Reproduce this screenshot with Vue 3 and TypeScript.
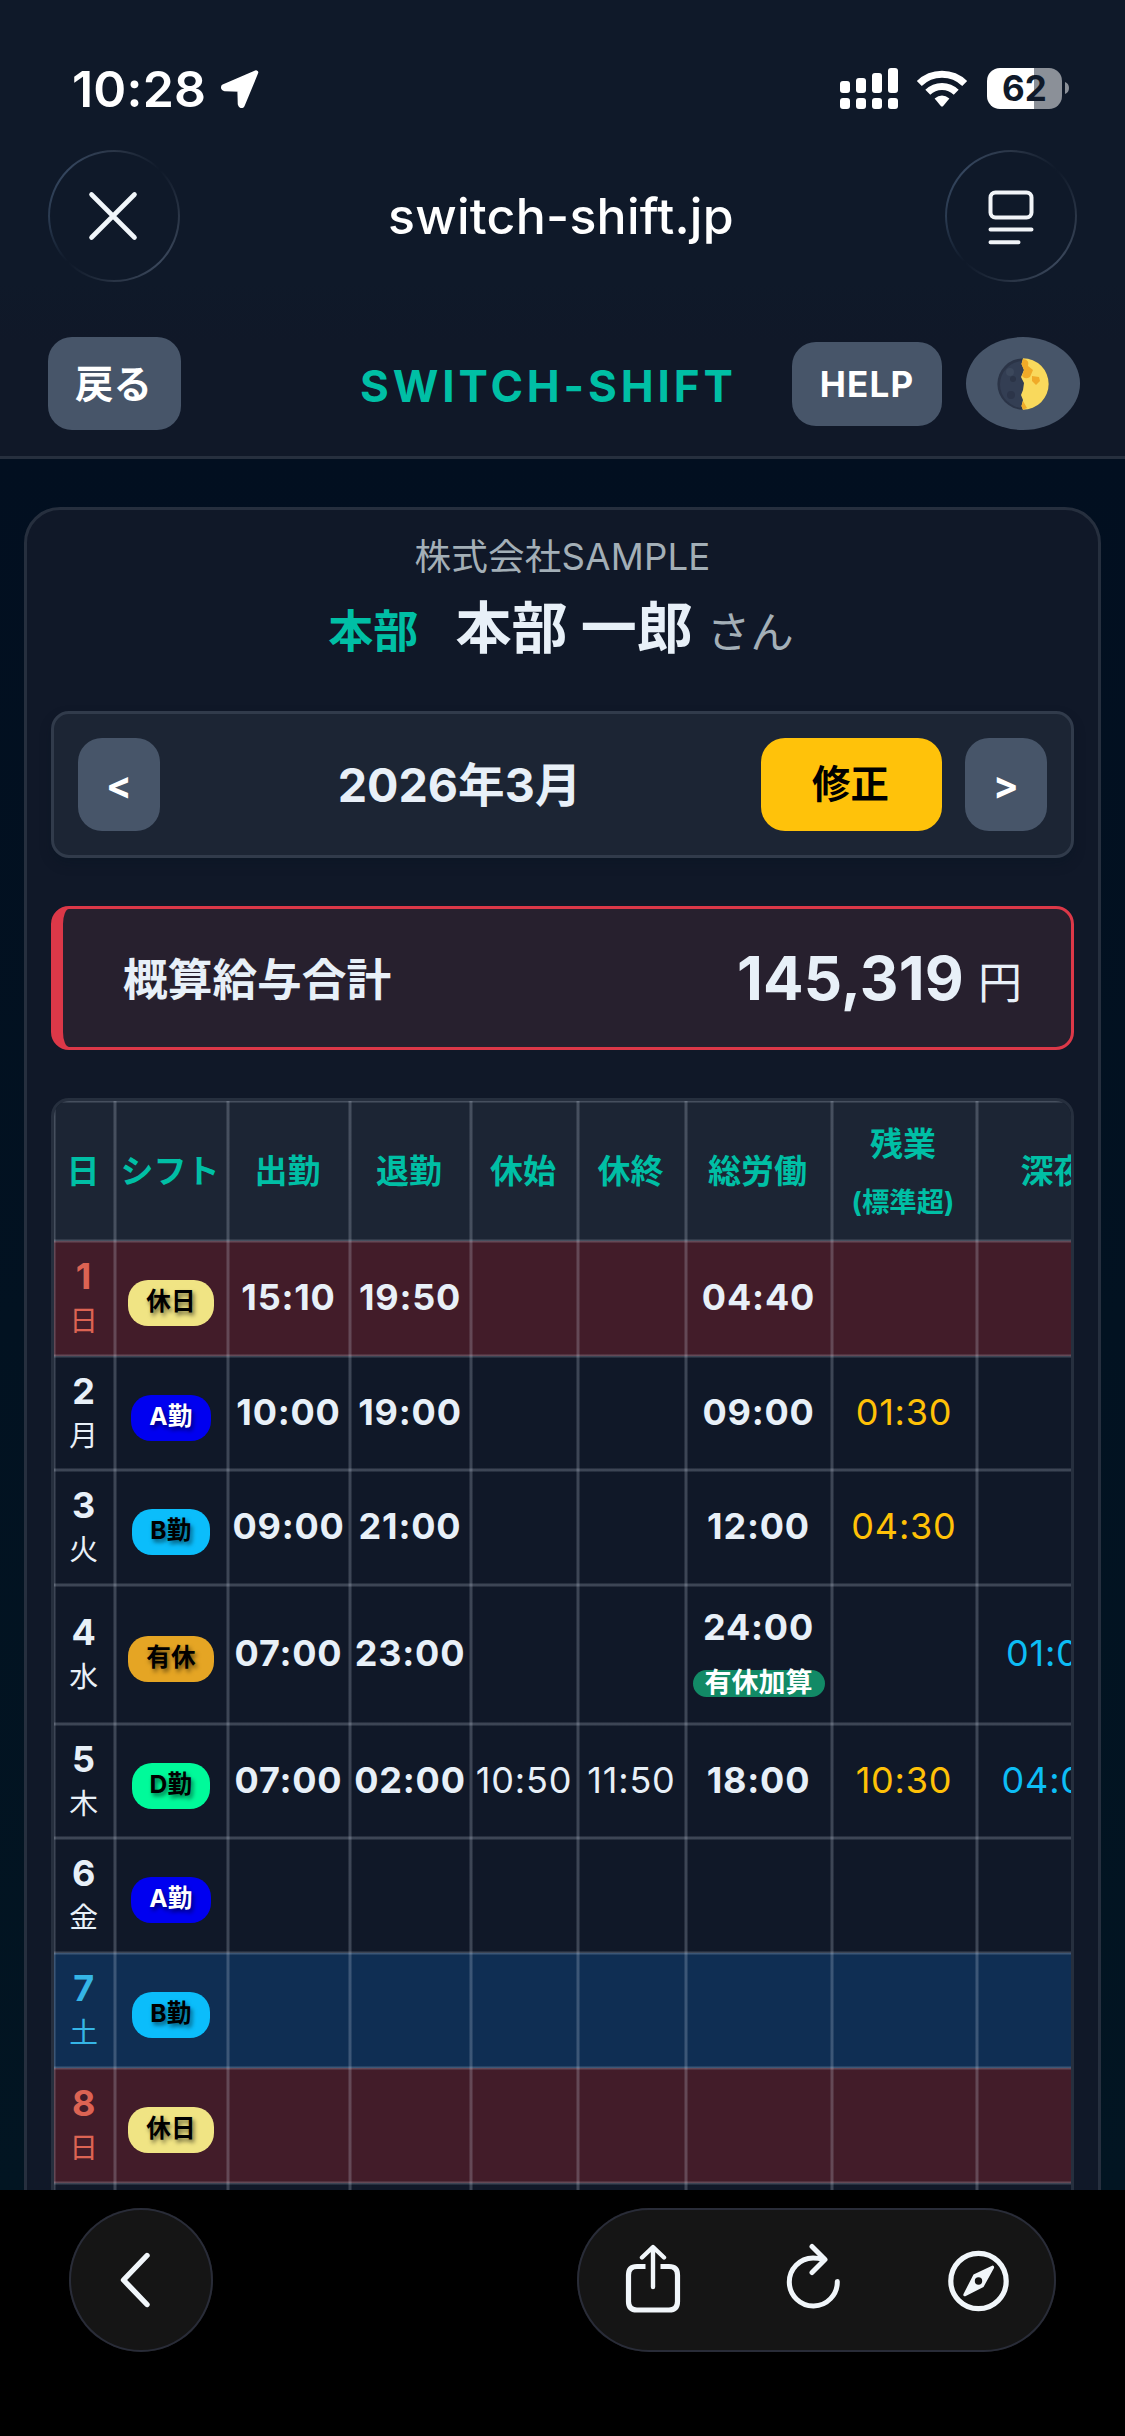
<script setup lang="ts">
interface Shift {
  label: string
  kind: string
}

interface DayRow {
  day: number
  weekday: string
  shift: Shift
  start?: string
  end?: string
  restStart?: string
  restEnd?: string
  total?: string
  paidLeave?: boolean
  overtime?: string
  night?: string
  tone?: 'sunday' | 'saturday'
  height: number
}

const off: Shift = { label: '休日', kind: 'off' }
const a: Shift = { label: 'A勤', kind: 'a' }
const b: Shift = { label: 'B勤', kind: 'b' }
const d: Shift = { label: 'D勤', kind: 'd' }
const paid: Shift = { label: '有休', kind: 'paid' }

const rows: DayRow[] = [
  { day: 1, weekday: '日', shift: off, start: '15:10', end: '19:50', total: '04:40', tone: 'sunday', height: 115 },
  { day: 2, weekday: '月', shift: a, start: '10:00', end: '19:00', total: '09:00', overtime: '01:30', height: 114 },
  { day: 3, weekday: '火', shift: b, start: '09:00', end: '21:00', total: '12:00', overtime: '04:30', height: 115 },
  { day: 4, weekday: '水', shift: paid, start: '07:00', end: '23:00', total: '24:00', paidLeave: true, night: '01:00', height: 139 },
  { day: 5, weekday: '木', shift: d, start: '07:00', end: '02:00', restStart: '10:50', restEnd: '11:50', total: '18:00', overtime: '10:30', night: '04:00', height: 114 },
  { day: 6, weekday: '金', shift: a, height: 115 },
  { day: 7, weekday: '土', shift: b, tone: 'saturday', height: 115 },
  { day: 8, weekday: '日', shift: off, tone: 'sunday', height: 115 },
]
</script>

<template>
  <div class="screen">
    <div class="status">
      <span class="clock">10:28</span>
      <svg class="loc" width="40" height="40" viewBox="0 0 40 40">
        <path d="M36 3.5 L3.5 17.5 Q2.6 19.6 5 20 L19.6 20.4 L20 35 Q20.6 37.6 22.4 36.5 Z" fill="#fff" stroke="#fff" stroke-width="4.5" stroke-linejoin="round" />
      </svg>
      <svg class="signal" width="58" height="41" viewBox="0 0 58 41" fill="#fff">
        <rect x="0" y="13" width="10" height="12" rx="3" />
        <rect x="16" y="10" width="10" height="15" rx="3" />
        <rect x="32" y="5" width="10" height="20" rx="3" />
        <rect x="48" y="0" width="10" height="25" rx="3" />
        <rect v-for="n in 4" :key="n" :x="(n - 1) * 16" y="30" width="10" height="11" rx="3" />
      </svg>
      <svg class="wifi" width="52" height="38" viewBox="0 0 52 38">
        <path d="M3.3 13.6 A32.5 32.5 0 0 1 48.7 13.6" fill="none" stroke="#fff" stroke-width="7" />
        <path d="M11.8 22.3 A20.2 20.2 0 0 1 40.2 22.3" fill="none" stroke="#fff" stroke-width="7" />
        <path d="M18.6 28.6 Q26 22.6 33.4 28.6 L27 36.2 Q26 37 25 36.2 Z" fill="#fff" />
      </svg>
      <div class="battery"><span>62</span></div>
      <svg class="nub" width="4" height="12" viewBox="0 0 4 12"><path d="M0 0 Q4 1.5 4 6 T0 12 Z" fill="#8b9098" /></svg>
    </div>

    <div class="browser-bar">
      <div class="round close">
        <svg width="52" height="52" viewBox="0 0 52 52">
          <path d="M4.5 4.5 L47.5 47.5 M47.5 4.5 L4.5 47.5" stroke="#f1f6fa" stroke-width="4.6" stroke-linecap="round" />
        </svg>
      </div>
      <span class="host">switch-shift.jp</span>
      <div class="round reader">
        <svg width="46" height="56" viewBox="0 0 46 56" fill="none" stroke="#f1f4f8" stroke-width="4" stroke-linecap="round">
          <rect x="2.5" y="2.5" width="41" height="25" rx="5" />
          <path d="M2.500 39.500 H43.500 M2.500 52.300 H30.500" />
        </svg>
      </div>
    </div>

    <header class="app-bar">
      <button class="btn back">戻る</button>
      <span class="brand">SWITCH-SHIFT</span>
      <button class="btn help">HELP</button>
      <button class="btn theme">
        <svg width="52" height="54" viewBox="0 0 52 54">
          <circle cx="26" cy="27" r="25.6" fill="#2b3447" />
          <circle cx="26.5" cy="27.5" r="23.5" fill="#333e53" />
          <path d="M26 1.3 A25.7 25.7 0 0 1 26 52.7 L24.5 49 L26 43 L24 38 L26 33 L27 26 L24 20 L27 13 L24.5 7 Z" fill="#f9d95c" />
          <path d="M26 2 Q33 3 31 9 L36 13 L33 20 Q28 23 25 19 L27 13 L24.5 7 Z M35 19 L42 20 L43 24 L39 28 L35 24 Z M26 44 L30 51 L26 52.7 L24.5 49 Z" fill="#f0aa28" />
          <circle cx="13" cy="15" r="4" fill="#3c485c" />
          <circle cx="16" cy="22" r="3" fill="#2b3447" />
          <circle cx="14" cy="38" r="4" fill="#2c3549" />
        </svg>
      </button>
    </header>

    <main class="page">
      <section class="card">
        <div class="company">株式会社SAMPLE</div>
        <div class="person">
          <span class="dept">本部</span>
          <span class="name">本部 一郎</span>
          <span class="san">さん</span>
        </div>

        <div class="month">
          <button class="btn step">&lt;</button>
          <span class="label">2026年3月</span>
          <button class="btn edit">修正</button>
          <button class="btn step">&gt;</button>
        </div>

        <div class="salary">
          <span class="caption">概算給与合計</span>
          <span class="amount">145,319</span>
          <span class="yen">円</span>
        </div>

        <div class="table">
          <div class="row head">
            <div class="cell">日</div>
            <div class="cell">シフト</div>
            <div class="cell">出勤</div>
            <div class="cell">退勤</div>
            <div class="cell">休始</div>
            <div class="cell">休終</div>
            <div class="cell">総労働</div>
            <div class="cell two-line"><span>残業</span><small>(標準超)</small></div>
            <div class="cell">深夜</div>
          </div>
          <div v-for="r in rows" :key="r.day" class="row" :class="r.tone" :style="{ height: r.height + 'px' }">
            <div class="cell date"><b>{{ r.day }}</b><i>{{ r.weekday }}</i></div>
            <div class="cell"><span class="badge" :class="r.shift.kind">{{ r.shift.label }}</span></div>
            <div class="cell strong">{{ r.start }}</div>
            <div class="cell strong">{{ r.end }}</div>
            <div class="cell">{{ r.restStart }}</div>
            <div class="cell">{{ r.restEnd }}</div>
            <div class="cell strong" :class="{ stacked: r.paidLeave }">
              <span>{{ r.total }}</span>
              <em v-if="r.paidLeave">有休加算</em>
            </div>
            <div class="cell overtime">{{ r.overtime }}</div>
            <div class="cell night">{{ r.night }}</div>
          </div>
          <div class="row">
            <div v-for="n in 9" :key="n" class="cell"></div>
          </div>
        </div>
      </section>
    </main>

    <nav class="toolbar">
      <div class="glass circle">
        <svg width="32" height="56" viewBox="0 0 32 56">
          <path d="M28 3.5 L4.5 28 L28 52.5" fill="none" stroke="#f1f6fa" stroke-width="5.4" stroke-linecap="round" stroke-linejoin="round" />
        </svg>
      </div>
      <div class="glass pill">
        <svg width="479" height="144" viewBox="0 0 479 144" fill="none" stroke="#f1f6fa" stroke-width="5.2" stroke-linecap="round" stroke-linejoin="round">
          <path stroke-linecap="butt" d="M68.5 58.5 H60 Q51.5 58.5 51.5 67 V93.5 Q51.5 102 60 102 H92 Q100.5 102 100.5 93.5 V67 Q100.5 58.5 92 58.5 H83.5" />
          <path stroke-width="4.4" d="M76 79 V39.5 M65 49.5 L76 39 L87 49.5" />
          <path d="M260.3 73.5 A24 24 0 1 1 236 50 Q241 50 247 51.5 M235 38.5 L248 51.5 L235 64.5" stroke-width="5" />
          <circle cx="401.5" cy="73" r="27.7" />
          <path d="M416.6 58 Q416 57 414 58.3 L396.5 66.5 L386.5 86 Q385.7 88.6 388.3 88.2 L406.5 79 L417 60 Q417.4 58.5 416.6 58 Z" fill="#f1f6fa" stroke="none" />
          <circle cx="401.5" cy="73" r="3.7" fill="#151515" stroke="none" />
        </svg>
      </div>
    </nav>
  </div>
</template>

<style>
body {
  background: #000;
}
</style>

<style scoped>
* {
  box-sizing: border-box;
}
.screen {
  width: 1125px;
  height: 2436px;
  overflow: hidden;
  display: flex;
  flex-direction: column;
  background: #000;
  color: #e8f0f8;
  font-family: Inter, "Noto Sans CJK JP", sans-serif;
}
button {
  border: 0;
  padding: 0;
  font: inherit;
}
.status {
  flex: none;
  height: 150px;
  padding: 68px 0 0 72px;
  display: flex;
  align-items: flex-start;
  background: #0f1929;
  color: #fff;
}
.clock {
  width: 148px;
  font-size: 50px;
  font-weight: 600;
  line-height: 42px;
  letter-spacing: 0.2px;
  white-space: nowrap;
}
.loc {
  margin-top: 1px;
}
.signal {
  margin-left: 580px;
}
.wifi {
  margin: 2px 0 0 18px;
}
.battery {
  margin-left: 19px;
  width: 75px;
  height: 41px;
  border-radius: 13px;
  background: linear-gradient(to right, #fff 47px, #8b9098 47px);
  color: #0f1929;
  font-size: 35px;
  font-weight: 700;
  line-height: 41px;
  text-align: center;
}
.nub {
  margin: 14px 0 0 3px;
}
.browser-bar {
  flex: none;
  height: 132px;
  padding: 0 48px;
  display: flex;
  align-items: center;
  justify-content: space-between;
  background: #0f1929;
}
.round {
  width: 132px;
  height: 132px;
  border-radius: 50%;
  border: 2px solid transparent;
  background: linear-gradient(#0f1929, #0f1929) padding-box,
    conic-gradient(from 45deg, #0f1929, #2a3546 12%, #3a475b 25%, #2a3546 37%, #0f1929 50%, #2a3a50 62%, #35465e 75%, #2a3546 88%, #0f1929) border-box;
  display: flex;
  align-items: center;
  justify-content: center;
}
.close {
  padding-right: 2px;
}
.reader {
  padding-top: 3px;
}
.host {
  color: #fff;
  font-size: 50px;
  font-weight: 500;
  line-height: 60px;
  letter-spacing: 0.25px;
  padding-right: 3px;
}
.app-bar {
  flex: none;
  height: 177px;
  padding: 55px 45px 0 48px;
  display: flex;
  align-items: flex-start;
  background: linear-gradient(#0f1929, #101828 60px);
  border-bottom: 3px solid #262f3e;
}
.btn {
  background: #475569;
  color: #fff;
  font-weight: 700;
  border-radius: 24px;
  display: flex;
  align-items: center;
  justify-content: center;
}
.back {
  width: 133px;
  height: 93px;
  padding: 0 2px 5px 0;
  font-size: 38.4px;
}
.brand {
  width: 430px;
  margin: 21px 0 0 179px;
  color: #00bfa5;
  font-size: 44px;
  font-weight: 700;
  line-height: 56px;
  letter-spacing: 3.9px;
}
.help {
  margin: 5px 0 0 2px;
  width: 150px;
  height: 84px;
  font-size: 35px;
  letter-spacing: 1.2px;
}
.theme {
  margin-left: 24px;
  width: 114px;
  height: 93px;
  border-radius: 50%;
}
.page {
  height: 1731px;
  flex: none;
  overflow: hidden;
  padding: 48px 24px 0;
  background: linear-gradient(#020f20, #021522);
}
.card {
  height: 1800px;
  border: 3px solid #262f3e;
  border-radius: 36px;
  background: #101828;
  padding: 20px 24px 0;
  display: flex;
  flex-direction: column;
}
.company {
  height: 54px;
  text-align: center;
  color: #a3afb7;
  font-size: 36.6px;
  line-height: 54px;
  letter-spacing: 0.2px;
}
.person {
  height: 78px;
  margin-top: 5px;
  padding-right: 3px;
  display: flex;
  justify-content: center;
  align-items: baseline;
  line-height: 78px;
  white-space: pre;
}
.dept {
  color: #00bfa5;
  font-size: 45px;
  font-weight: 700;
}
.name {
  margin-left: 37px;
  font-size: 56px;
  font-weight: 700;
}
.san {
  margin-left: 14px;
  color: #a3afb7;
  font-size: 43.5px;
}
.month {
  margin-top: 44px;
  flex: none;
  height: 147px;
  padding: 0 24px;
  border: 3px solid #313b4b;
  border-radius: 18px;
  background: #1c2534;
  display: flex;
  align-items: center;
  box-shadow: 0 6px 12px rgba(0, 20, 30, 0.25);
}
.step {
  width: 82px;
  height: 93px;
  font-size: 38px;
}
.label {
  width: 601px;
  text-align: center;
  font-size: 46.6px;
  font-weight: 700;
  padding: 0 2px 6px 0;
}
.edit {
  width: 181px;
  height: 93px;
  margin-right: 23px;
  padding: 0 2px 7px 0;
  background: #ffc20a;
  color: #000;
  font-size: 38.4px;
}
.salary {
  margin-top: 48px;
  flex: none;
  height: 144px;
  padding: 0 49px 0 60px;
  border: 3px solid #dc3848;
  border-left-width: 12px;
  border-radius: 18px;
  background: #27202e;
  display: flex;
  align-items: center;
}
.caption {
  padding-bottom: 3px;
  font-size: 44.7px;
  font-weight: 700;
}
.amount {
  margin-left: auto;
  font-size: 60px;
  font-weight: 700;
  letter-spacing: 0.2px;
}
.yen {
  margin: 3px 0 0 14px;
  font-size: 44px;
}
.table {
  margin-top: 48px;
  flex: none;
  height: 1150px;
  overflow: hidden;
  border: 3px solid #262f3e;
  border-radius: 18px;
}
.row {
  height: 114px;
  display: grid;
  grid-template-columns: 61px 113px 122px 121px 107px 108px 146px 145px 156px;
}
.sunday {
  background: #421c29;
}
.saturday {
  background: #0f2e53;
}
.cell {
  --in: rgba(220, 230, 245, 0.22);
  --out: rgba(220, 230, 245, 0.11);
  display: flex;
  flex-direction: column;
  align-items: center;
  justify-content: center;
  font-size: 36px;
  line-height: 44px;
  padding: 0 1px 3px 0;
  letter-spacing: 0.8px;
  white-space: nowrap;
  background:
    linear-gradient(to right, var(--in) 1px, var(--out) 1px 2px, transparent 2px calc(100% - 2px), var(--out) calc(100% - 2px) calc(100% - 1px), var(--in) calc(100% - 1px)),
    linear-gradient(to bottom, var(--in) 1px, var(--out) 1px 2px, transparent 2px calc(100% - 2px), var(--out) calc(100% - 2px) calc(100% - 1px), var(--in) calc(100% - 1px));
}
.strong {
  font-weight: 700;
}
.stacked {
  padding-bottom: 8px;
}
.head {
  height: 140px;
  background: #1c2534;
}
.head .cell {
  color: #00bfa5;
  font-size: 33px;
  font-weight: 700;
  letter-spacing: 0;
  padding: 0 3px 0 0;
}
.head .two-line {
  padding-top: 3px;
}
.head small {
  font-size: 27.4px;
  line-height: 44px;
  margin-top: 14px;
}
.date {
  padding-bottom: 0;
}
.date b {
  line-height: 44px;
}
.date i {
  font-style: normal;
  font-size: 28.8px;
  line-height: 44px;
  margin-top: 1px;
}
.sunday .date {
  color: #dc6353;
}
.saturday .date {
  color: #35b5e6;
}
.overtime {
  color: #ffc107;
}
.night {
  color: #0dbdf5;
}
.badge {
  margin-top: 12px;
  height: 46px;
  padding: 0 18px;
  border-radius: 20px;
  font-size: 24.6px;
  font-weight: 700;
  line-height: 42px;
  letter-spacing: 0.2px;
  color: #000;
  text-shadow: 2px 3px 4px rgba(0, 0, 0, 0.55);
}
.off {
  background: #f0e484;
}
.a {
  background: #0000f0;
  color: #fff;
}
.b {
  background: #0bbdfb;
}
.d {
  background: #00fa9a;
}
.paid {
  background: #e5a524;
}
em {
  margin-top: 21px;
  height: 27px;
  padding: 0 12px;
  border-radius: 14px;
  background: #128a66;
  color: #fff;
  font-style: normal;
  font-size: 27px;
  line-height: 25px;
  letter-spacing: 0;
}
.toolbar {
  flex: none;
  padding: 18px 69px 0;
  display: flex;
  justify-content: space-between;
}
.glass {
  height: 144px;
  border-radius: 72px;
  background: #151515;
  box-shadow: inset 0 0 0 2px #292c38;
  display: flex;
  align-items: center;
  justify-content: center;
}
.circle {
  width: 144px;
  padding-right: 12px;
}
.pill {
  width: 479px;
}
</style>
